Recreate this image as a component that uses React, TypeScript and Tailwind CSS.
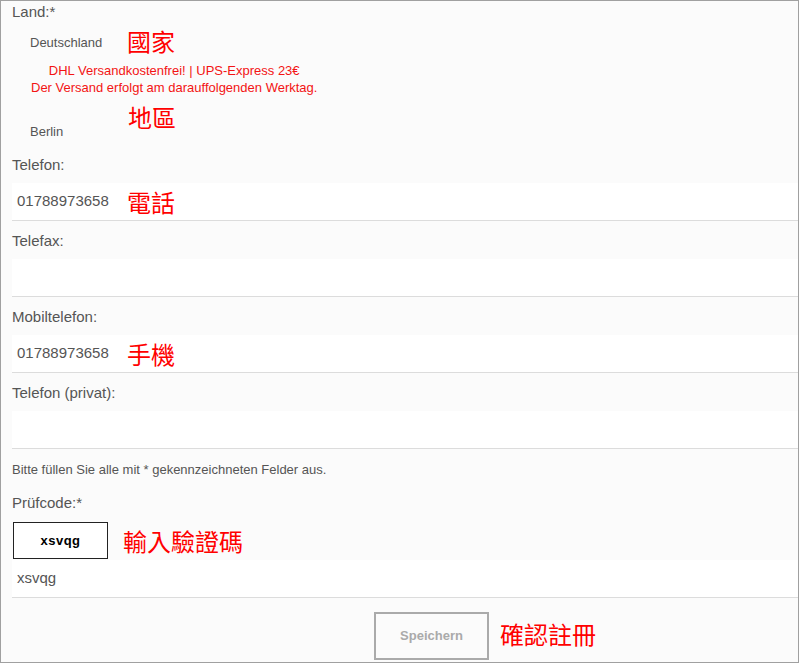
import React from "react";

const sans = "font-['Liberation_Sans',Arial,sans-serif]";
const cjk = "font-['Noto_Sans_CJK_TC','Noto_Sans_CJK_SC',sans-serif] text-[24px] leading-[26px] text-[#ff0000]";

function Label({ children }: { children: React.ReactNode }) {
  return <div className="h-[38px] pt-[10px] text-[15px] leading-[20px] text-[#555]">{children}</div>;
}

function Field({ value, note }: { value?: string; note?: string }) {
  return (
    <div className="flex h-[38px] items-center border-b border-[#dcdcdc] bg-white pl-[5px]">
      <span className="w-[110px] text-[15px] text-[#555]">{value}</span>
      {note && <span className={cjk}>{note}</span>}
    </div>
  );
}

export default function App() {
  return (
    <div className={`${sans} h-[663px] w-[800px] bg-white`}>
      <div className="h-[663px] w-[799px] border border-[#a0a0a0] bg-[#fbfbfb] pl-[11px]">
        {/* Land */}
        <div className="pt-[1px] text-[15px] leading-[20px] text-[#555]">Land:*</div>
        <div className="mt-[6px] flex items-start">
          <span className="w-[115px] pl-[18px] text-[13px] leading-[30px] text-[#555]">Deutschland</span>
          <span className={cjk}>國家</span>
        </div>
        <div className="ml-[19px] mt-[4px] w-fit text-center text-[13px] leading-[17px] text-[#f31414]">
          DHL Versandkostenfrei! | UPS-Express 23€
          <br />
          Der Versand erfolgt am darauffolgenden Werktag.
        </div>
        <div className="mt-[8px] flex h-[41px] items-start">
          <span className="mt-[18px] w-[116px] pl-[18px] text-[13px] leading-[20px] text-[#555]">Berlin</span>
          <span className={cjk}>地區</span>
        </div>

        <Label>Telefon:</Label>
        <Field value="01788973658" note="電話" />
        <Label>Telefax:</Label>
        <Field />
        <Label>Mobiltelefon:</Label>
        <Field value="01788973658" note="手機" />
        <Label>Telefon (privat):</Label>
        <Field />

        <div className="pt-[13px] text-[13px] leading-[16px] text-[#555]">
          Bitte füllen Sie alle mit * gekennzeichneten Felder aus.
        </div>
        <div className="mt-[15px] text-[15px] leading-[20px] text-[#555]">Prüfcode:*</div>
        <div className="mt-[9px] flex items-center">
          <div className="ml-[1px] flex h-[37px] w-[95px] items-center justify-center border border-[#222] bg-white text-[13px] font-bold tracking-[0.5px] text-black">
            xsvqg
          </div>
          <span className={`${cjk} ml-[15px]`}>輸入驗證碼</span>
        </div>
        <div className="mt-[1px] flex h-[38px] items-center border-b border-[#dcdcdc] bg-white pl-[5px] text-[15px] text-[#555]">
          xsvqg
        </div>

        <div className="mt-[14px] flex items-center">
          <button className="ml-[362px] h-[48px] w-[115px] border-2 border-[#aaa] bg-[#fbfbfb] text-[13px] font-bold text-[#aaa]">
            Speichern
          </button>
          <span className={`${cjk} ml-[11px] -mt-[4px]`}>確認註冊</span>
        </div>
      </div>
    </div>
  );
}
